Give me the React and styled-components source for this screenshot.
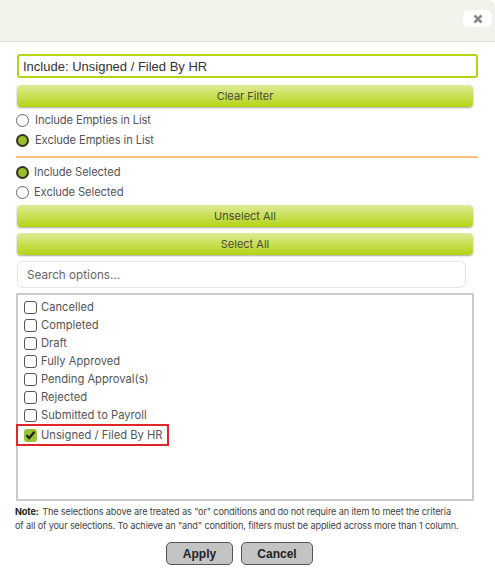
import React from "react";
import styled, { createGlobalStyle } from "styled-components";

const Global = createGlobalStyle`
  html, body { margin: 0; padding: 0; background: #fff; }
  body { font-family: "Inter", "Liberation Sans", sans-serif; }
`;

const Dialog = styled.div`
  width: 495px;
  height: 569px;
  background: #fff;
  display: flex;
  flex-direction: column;
  overflow: hidden;
`;

const Header = styled.div`
  height: 42px;
  flex: none;
  background: #f2f4ec;
  border-bottom: 1px solid #e2e4dc;
  border-top-right-radius: 8px;
  display: flex;
  justify-content: flex-end;
  align-items: flex-start;
  padding: 10px 3px 0 0;
  box-sizing: border-box;
`;

const CloseButton = styled.button`
  width: 29px;
  height: 17px;
  border: none;
  border-radius: 6px;
  background: #fff;
  display: flex;
  align-items: center;
  justify-content: center;
  padding: 0;
`;

const Body = styled.div`
  display: flex;
  flex-direction: column;
  padding: 12px 17px 0 16px;
`;

const FilterInput = styled.div`
  height: 24px;
  box-sizing: border-box;
  border: 2px solid #b6d40f;
  border-radius: 3px;
  margin-left: 1px;
  width: 461px;
  font-family: "Liberation Sans", Arial, sans-serif;
  font-size: 13px;
  color: #333;
  display: flex;
  align-items: center;
  padding-left: 4px;
`;

const GreenButton = styled.button`
  margin-left: 1px;
  width: 456px;
  height: 22px;
  margin-top: ${(p) => p.$mt}px;
  border: none;
  border-radius: 4px;
  background: linear-gradient(to bottom, #dfec98 0%, #c7df55 50%, #b4d414 100%);
  box-shadow: 0 1px 2px rgba(0, 0, 0, 0.35);
  font-family: "Inter", "Liberation Sans", sans-serif;
  font-size: 11px;
  color: #4a4a3a;
  padding: 0;
  cursor: pointer;
`;

const RadioRow = styled.label`
  display: flex;
  align-items: center;
  gap: ${(p) => p.$gap || 6}px;
  height: 20px;
  font-size: 11.2px;
  color: #555;
  letter-spacing: -0.1px;
`;

const Radio = styled.span`
  width: 13px;
  height: 13px;
  box-sizing: border-box;
  border-radius: 50%;
  flex: none;
  border: ${(p) => (p.$checked ? "2.5px solid #2f3320" : "1px solid #666")};
  background: ${(p) => (p.$checked ? "#9cbd2d" : "#fff")};
`;

const RadioGroup = styled.div`
  display: flex;
  flex-direction: column;
  margin-top: ${(p) => p.$mt}px;
`;

const Divider = styled.div`
  height: 2px;
  background: #fdc07c;
  margin: 6px 0 4px 0;
  width: 462px;
`;

const Search = styled.div`
  margin-top: 6px;
  margin-left: 1px;
  width: 449px;
  height: 27px;
  box-sizing: border-box;
  border: 1px solid #e6e6e6;
  border-radius: 6px;
  display: flex;
  align-items: center;
  padding-left: 9px;
  font-size: 11.7px;
  color: #666;
`;

const ListBox = styled.div`
  margin-top: 5px;
  width: 458px;
  height: 208px;
  box-sizing: border-box;
  border: 2px solid #cbcbcb;
  padding: 3px 0 0 6px;
  display: flex;
  flex-direction: column;
`;

const Item = styled.div`
  display: flex;
  align-items: center;
  gap: 4px;
  height: 18px;
  font-size: 11.2px;
  color: #555;
  align-self: flex-start;
  box-sizing: border-box;
  ${(p) =>
    p.$selected &&
    `
    border: 2px solid #e1262b;
    height: 22px;
    margin: 0 0 0 -8px;
    padding: 0 4px 0 6px;
  `}
`;

const Box = styled.span`
  width: 13px;
  height: 13px;
  box-sizing: border-box;
  border-radius: 3px;
  flex: none;
  border: ${(p) => (p.$checked ? "none" : "1px solid #555")};
  background: ${(p) => (p.$checked ? "#9cc03a" : "#fff")};
  display: flex;
  align-items: center;
  justify-content: center;
`;

const Note = styled.p`
  margin: 4px 0 0 -1px;
  font-size: 9.2px;
  line-height: 14px;
  color: #444;
  letter-spacing: -0.15px;
  width: 444px;
  b { color: #222; margin-right: 1px; }
`;

const Footer = styled.div`
  display: flex;
  justify-content: center;
  gap: 8px;
  margin-top: 9px;
  padding-right: 15px;
`;

const GrayButton = styled.button`
  width: ${(p) => p.$w}px;
  height: 23px;
  border: 1px solid #555;
  border-radius: 5px;
  background: #c3c3c3;
  font-family: "Liberation Sans", Arial, sans-serif;
  font-weight: bold;
  font-size: 12px;
  color: #222;
  padding: 0;
`;

const items = [
  "Cancelled",
  "Completed",
  "Draft",
  "Fully Approved",
  "Pending Approval(s)",
  "Rejected",
  "Submitted to Payroll",
];

export default function App() {
  return (
    <Dialog>
      <Global />
      <Header>
        <CloseButton aria-label="close">
          <svg width="10" height="10" viewBox="0 0 10 10">
            <path d="M1.5 1.5 L8.5 8.5 M8.5 1.5 L1.5 8.5" stroke="#8a8a8a" strokeWidth="2.6" strokeLinecap="butt" />
          </svg>
        </CloseButton>
      </Header>
      <Body>
        <FilterInput>Include: Unsigned / Filed By HR</FilterInput>
        <GreenButton $mt={7}>Clear Filter</GreenButton>
        <RadioGroup $mt={3}>
          <RadioRow>
            <Radio />
            Include Empties in List
          </RadioRow>
          <RadioRow>
            <Radio $checked />
            Exclude Empties in List
          </RadioRow>
        </RadioGroup>
        <Divider />
        <RadioGroup $mt={0}>
          <RadioRow $gap={5}>
            <Radio $checked />
            Include Selected
          </RadioRow>
          <RadioRow $gap={5}>
            <Radio />
            Exclude Selected
          </RadioRow>
        </RadioGroup>
        <GreenButton $mt={3}>Unselect All</GreenButton>
        <GreenButton $mt={6}>Select All</GreenButton>
        <Search>Search options...</Search>
        <ListBox>
          {items.map((t) => (
            <Item key={t}>
              <Box />
              {t}
            </Item>
          ))}
          <Item $selected>
            <Box $checked>
              <svg width="11" height="10" viewBox="0 0 11 10">
                <path d="M1.5 5.2 L4.2 8 L9.5 1.8" fill="none" stroke="#1f1f1f" strokeWidth="2.2" />
              </svg>
            </Box>
            Unsigned / Filed By HR
          </Item>
        </ListBox>
        <Note>
          <b>Note:</b> The selections above are treated as "or" conditions and do not require an item to meet the criteria of all of your selections. To achieve an "and" condition, filters must be applied across more than 1 column.
        </Note>
        <Footer>
          <GrayButton $w={67}>Apply</GrayButton>
          <GrayButton $w={72}>Cancel</GrayButton>
        </Footer>
      </Body>
    </Dialog>
  );
}
